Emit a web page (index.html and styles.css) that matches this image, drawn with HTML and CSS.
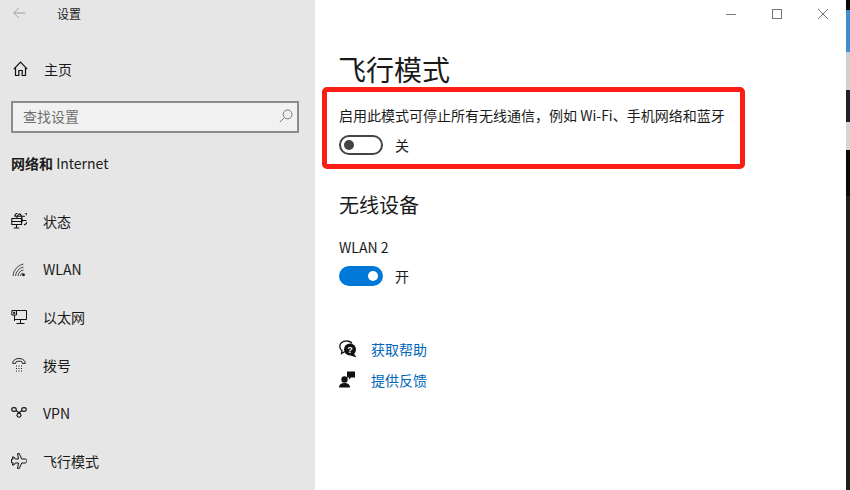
FILE: index.html
```html
<!DOCTYPE html>
<html lang="zh-CN">
<head>
<meta charset="utf-8">
<title>设置</title>
<link rel="stylesheet" href="styles.css">
</head>
<body>
<div class="window">
  <aside class="sidebar">
    <div class="titlebar">
      <svg class="back" width="14" height="12" viewBox="0 0 14 12"><path d="M12.500 6H.8M5.800 1 .8 6 5.800 11" fill="none" stroke="#a0a0a0" stroke-width="1"/></svg>
      <span class="title">设置</span>
    </div>
    <a class="home">
      <svg class="icon-home" width="16" height="16" viewBox="0 0 16 16"><path d="M.8 8.200 7.500 1.200 14.200 8.200M2.500 6.800V14.500H5.800V9.500H9.200V14.500H12.500V6.800" fill="none" stroke="#111" stroke-width="1.200"/></svg>
      <span>主页</span>
    </a>
    <div class="search">
      <span class="placeholder">查找设置</span>
      <svg width="14" height="14" viewBox="0 0 14 14"><circle cx="8.600" cy="5.400" r="4.400" fill="none" stroke="#777" stroke-width="1"/><path d="M5.400 8.600 .8 13.200" stroke="#777" stroke-width="1"/></svg>
    </div>
    <h2 class="section"><b>网络和</b> Internet</h2>
    <nav class="nav">
      <a class="item">
        <svg class="icon" width="16" height="16" viewBox="0 0 16 16"><g fill="none" stroke="#111" stroke-width="1.100"><path d="M3.500 3.500A7 7 0 1 1 13 12M8.500 .8C6.800 1.800 6 3.300 5.800 5M8.500 .8C10.500 2 11.500 5 11 9.500M4 3.200H14M11 7.500H15.500"/><path d="M.8 5.500H10.500V11.500H.8ZM.8 8.500H10.500M5.500 11.500V14.500M2.800 15H8.200"/></g></svg>
        <span>状态</span>
      </a>
      <a class="item">
        <svg class="icon" width="16" height="16" viewBox="0 0 16 16"><g fill="none" stroke="#333" stroke-width=".9"><path d="M2 15A13 13 0 0 1 12.500 3M4.500 15A10 10 0 0 1 12.500 6M7 15A7 7 0 0 1 12.500 9M9.300 15A4 4 0 0 1 12 12"/></g><circle cx="12.500" cy="13.800" r="1.400" fill="#111"/></svg>
        <span>WLAN</span>
      </a>
      <a class="item">
        <svg class="icon" width="16" height="16" viewBox="0 0 16 16"><g fill="none" stroke="#111" stroke-width="1"><path d="M5.500 1.500H15.500V10.500H3.500M.8 1.500H5.500V6H.8ZM3.500 6V12M9.500 10.500V14M5.500 14.500H13.500"/></g><rect x="2.200" y="2.800" width="2" height="2" fill="#111"/></svg>
        <span>以太网</span>
      </a>
      <a class="item">
        <svg class="icon" width="16" height="16" viewBox="0 0 16 16"><path d="M3.500 6.500H1.800V5C3 2.500 5.500 1.500 8 1.500S13 2.500 14.200 5V6.500H11.500L11 4.800C9 4 7 4 5 4.800L4.500 6.500Z" fill="none" stroke="#111" stroke-width=".9"/><g fill="#222"><rect x="5" y="8.500" width="1" height="1"/><rect x="7.500" y="8.500" width="1" height="1"/><rect x="10" y="8.500" width="1" height="1"/><rect x="5" y="11" width="1" height="1"/><rect x="7.500" y="11" width="1" height="1"/><rect x="10" y="11" width="1" height="1"/><rect x="5" y="13.500" width="1" height="1"/><rect x="7.500" y="13.500" width="1" height="1"/><rect x="10" y="13.500" width="1" height="1"/></g></svg>
        <span>拨号</span>
      </a>
      <a class="item">
        <svg class="icon" width="16" height="16" viewBox="0 0 16 16"><g fill="none" stroke="#111" stroke-width="1.100"><ellipse cx="3" cy="4.500" rx="2.300" ry="1.900"/><ellipse cx="13" cy="4.500" rx="2.300" ry="1.900"/><path d="M5 5.500 9.600 9A2 2 0 1 1 6.400 9L11 5.500"/></g></svg>
        <span>VPN</span>
      </a>
      <a class="item">
        <svg class="icon" width="16" height="16" viewBox="0 0 16 16"><path d="M6.500 .6H8.300L10.700 6H14C15.100 6 15.900 7 15.900 8S15.100 10 14 10H10.700L8.300 15.400H6.500L7.500 10H4.200L3 12H1.300L2.200 10V9.800H.5V6.200H2.200V6L1.300 4H3L4.200 6H7.500Z" fill="none" stroke="#111" stroke-width="1"/></svg>
        <span>飞行模式</span>
      </a>
    </nav>
  </aside>
  <main class="content">
    <div class="controls">
      <svg width="10" height="10" viewBox="0 0 10 10"><path d="M0 5.500H10" stroke="#777"/></svg>
      <svg width="10" height="10" viewBox="0 0 10 10"><rect x=".5" y=".5" width="9" height="9" fill="none" stroke="#777"/></svg>
      <svg width="10" height="10" viewBox="0 0 10 10"><path d="M0 0 10 10M10 0 0 10" stroke="#777"/></svg>
    </div>
    <h1 class="heading">飞行模式</h1>
    <p class="desc">启用此模式可停止所有无线通信，例如 Wi-Fi、手机网络和蓝牙</p>
    <div class="toggle-row">
      <span class="toggle off"><span class="knob"></span></span>
      <span>关</span>
    </div>
    <h2 class="sub">无线设备</h2>
    <p class="device">WLAN 2</p>
    <div class="toggle-row">
      <span class="toggle on"><span class="knob"></span></span>
      <span>开</span>
    </div>
    <div class="links">
      <a class="link">
        <svg width="18" height="18" viewBox="0 0 18 18"><path d="M7.500 1C3.500 1 .8 3.300 .8 6.500C.8 8.200 1.600 9.700 3 10.600L2.500 13.500L6 11.500" fill="none" stroke="#111" stroke-width="1.300"/><path d="M7.500 1C10 1 12 2 13 3.500" fill="none" stroke="#111" stroke-width="1.300"/><circle cx="11" cy="9.500" r="6" fill="#111"/><path d="M14.500 13 17.500 17.500 11.500 15.500Z" fill="#111"/><text x="11" y="12.700" class="qmark" text-anchor="middle">?</text></svg>
        <span>获取帮助</span>
      </a>
      <a class="link">
        <svg width="18" height="18" viewBox="0 0 18 18"><circle cx="5.500" cy="8.500" r="3.200" fill="#111"/><path d="M0 16.500C0 13.500 2 12 5.500 12S11 13.500 11 16.500Z" fill="#111"/><path d="M8 .5H16V6.500H12L10 8.500V6.500H8Z" fill="#111"/></svg>
        <span>提供反馈</span>
      </a>
    </div>
    <div class="highlight"></div>
  </main>
  <div class="backdrop">
    <span class="bd-black"></span>
    <span class="bd-blue"></span>
    <span class="bd-gray1"></span>
    <span class="bd-dark"></span>
    <span class="bd-gray2"></span>
    <span class="bd-black2"></span>
    <span class="bd-rest"></span>
  </div>
</div>
</body>
</html>
```
FILE: styles.css
```css
* { box-sizing: border-box; }
html, body { margin: 0; height: 100%; }
body {
  font-family: "Noto Sans CJK SC", "Open Sans", "Liberation Sans", sans-serif;
  font-size: 14px;
  color: #1a1a1a;
  background: #fff;
  overflow: hidden;
}
.window { display: flex; width: 850px; height: 490px; }
.sidebar {
  width: 315px;
  flex: none;
  background: #e6e6e6;
  padding: 0 16px 0 11px;
  overflow: hidden;
}
.titlebar { display: flex; align-items: center; height: 26px; padding-left: 2px; }
.back { flex: none; }
.title { margin-left: 30px; font-size: 12px; }
.home { display: flex; align-items: center; height: 24px; margin-top: 31px; padding-left: 2px; }
.icon-home { flex: none; margin-right: 15px; }
.icon { flex: none; margin-right: 16px; }
.search {
  display: flex;
  align-items: center;
  justify-content: space-between;
  height: 32px;
  margin-top: 20px;
  padding: 0 4px 2px 10px;
  border: 2px solid #8c8c8c;
  background: #f1f1f1;
}
.placeholder { color: #707070; }
.section { margin: 20px 0 0; font-size: 14px; font-weight: 400; line-height: 20px; }
.section b { font-weight: 700; }
.nav { display: flex; flex-direction: column; gap: 24px; margin-top: 36px; }
.item { display: flex; align-items: center; height: 24px; }
.content { flex: 1; position: relative; padding-left: 24px; }
.controls {
  display: flex;
  justify-content: flex-end;
  gap: 36px;
  align-items: center;
  height: 27px;
  padding-right: 18px;
}
.heading { margin: 23px 0 0 -1px; font-size: 28px; font-weight: 400; line-height: 38px; }
.desc { margin: 17px 0 0; line-height: 20px; }
.toggle-row { display: flex; align-items: center; gap: 12px; height: 20px; margin-top: 9px; }
.desc + .toggle-row { margin-top: 10px; }
.toggle {
  display: flex;
  align-items: center;
  width: 44px;
  height: 20px;
  border-radius: 10px;
  padding: 0 5px;
}
.toggle.off { border: 2px solid #444; padding: 0 3px; background: #fff; }
.toggle.on { background: #0078d7; justify-content: flex-end; }
.knob { width: 10px; height: 10px; border-radius: 50%; }
.off .knob { background: #444; }
.on .knob { background: #fff; }
.sub { margin: 35px 0 0; font-size: 20px; font-weight: 400; line-height: 30px; }
.device { margin: 17px 0 0; line-height: 20px; }
.links { display: flex; flex-direction: column; gap: 13px; margin-top: 54px; }
.link { display: flex; align-items: center; gap: 14px; height: 18px; color: #0067b8; }
.qmark { font: 700 9px "Liberation Sans", sans-serif; fill: #fff; }
.highlight {
  position: absolute;
  left: 7px;
  top: 87px;
  width: 423px;
  height: 82px;
  border: 5px solid #fa1e14;
  border-radius: 5px;
}
.backdrop { width: 4px; flex: none; display: flex; flex-direction: column; }
.bd-black { height: 10px; background: #0a0a0a; }
.bd-blue { height: 42px; background: #3f8fd0; }
.bd-gray1 { height: 38px; background: #cfcfcf; }
.bd-dark { height: 32px; background: #1c2329; }
.bd-gray2 { height: 28px; background: #d4d4d4; }
.bd-black2 { height: 46px; background: #0a0a0a; }
.bd-rest { flex: 1; background: #1f1f1f; }
```
